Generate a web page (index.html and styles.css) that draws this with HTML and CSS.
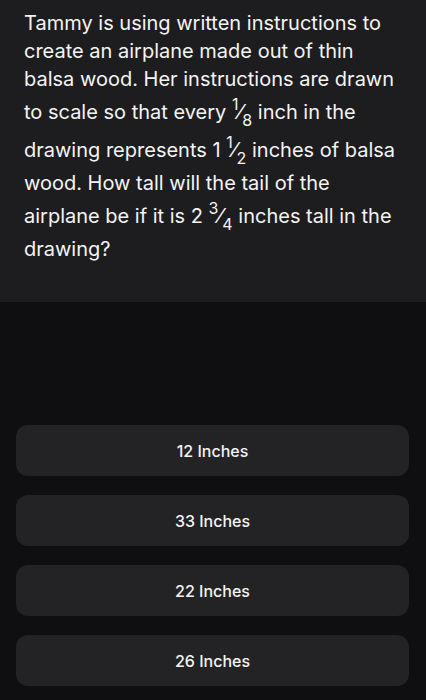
FILE: index.html
```html
<!DOCTYPE html>
<html lang="en">
<head>
  <meta charset="UTF-8" />
  <meta name="viewport" content="width=device-width, initial-scale=1.0" />
  <title>Question</title>
  <link rel="stylesheet" href="styles.css">
</head>
<body>

  <div class="question">
    <p class="prompt">
      Tammy is using written instructions to create an airplane made out of thin balsa wood. Her instructions are drawn to scale so that every
      <span class="frac"><span class="num">1</span><span class="slash">⁄</span><span class="den">8</span></span>
      inch in the drawing represents 1
      <span class="frac"><span class="num">1</span><span class="slash">⁄</span><span class="den">2</span></span>
      inches of balsa wood. How tall will the tail of the airplane be if it is 2
      <span class="frac"><span class="num">3</span><span class="slash">⁄</span><span class="den">4</span></span>
      inches tall in the drawing?
    </p>
  </div>

  <div class="options">
    <button class="option">12 Inches</button>
    <button class="option">33 Inches</button>
    <button class="option">22 Inches</button>
    <button class="option">26 Inches</button>
  </div>

</body>
</html>
```

FILE: styles.css
```css
:root {
  --panel: #1d1d1f;
  --page: #0f0f11;
  --card: #232325;
  --text: #f4f4f4;
  --font: Inter, 'Noto Sans', sans-serif;
}

body {
  margin: 0;
  background: var(--page);
  color: var(--text);
  font-family: var(--font);
}

.question {
  background: var(--panel);
  height: 302px;
  box-sizing: border-box;
  padding: 9px 30px 0 24px;
}

.prompt {
  margin: 0;
  font-size: 20px;
  line-height: 28px;
}

.frac {
  display: inline-block;
  line-height: 38px;
}

.num,
.den {
  font-size: 16px;
  line-height: 1;
}

.num {
  vertical-align: 9px;
}

.den {
  vertical-align: -7px;
}

.slash {
  font-size: 20px;
}

.options {
  display: flex;
  flex-direction: column;
  gap: 19px;
  padding: 123px 17px 0 16px;
}

.option {
  height: 51px;
  border: none;
  border-radius: 12px;
  background: var(--card);
  color: var(--text);
  font-family: var(--font);
  font-size: 16px;
  font-weight: 500;
  cursor: pointer;
}
```
